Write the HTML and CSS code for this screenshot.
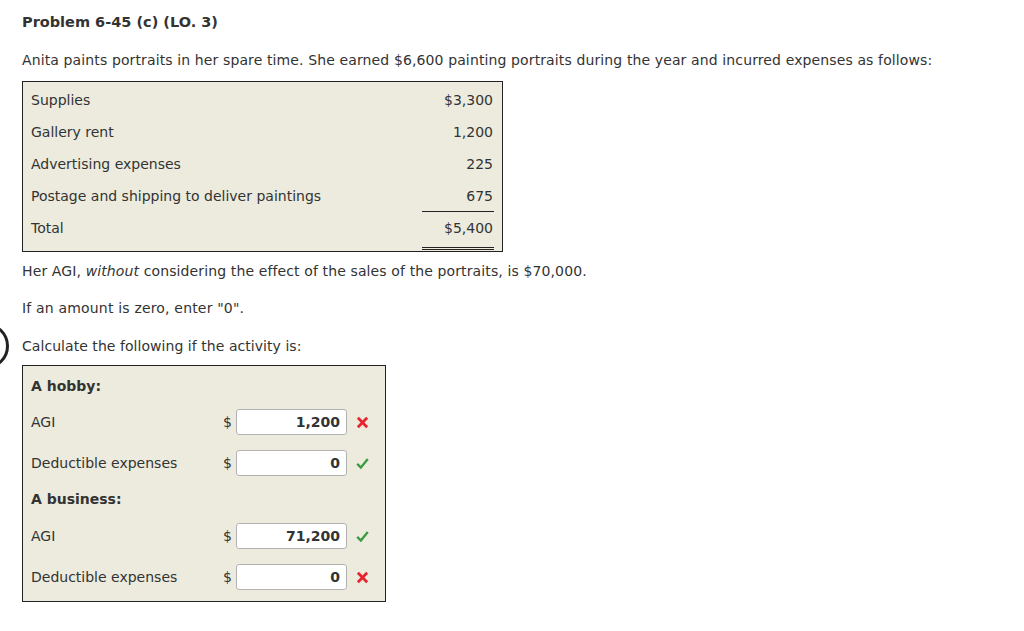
FILE: index.html
```html
<!DOCTYPE html>
<html>
<head>
<meta charset="utf-8">
<link rel="stylesheet" href="styles.css">
</head>
<body>
<div class="page">
  <h1 class="title">Problem 6-45 (c) (LO. 3)</h1>
  <p class="intro">Anita paints portraits in her spare time. She earned $6,600 painting portraits during the year and incurred expenses as follows:</p>
  <div class="expenses">
    <div class="row"><span class="lbl">Supplies</span><span class="amt">$3,300</span></div>
    <div class="row"><span class="lbl">Gallery rent</span><span class="amt">1,200</span></div>
    <div class="row"><span class="lbl">Advertising expenses</span><span class="amt">225</span></div>
    <div class="row"><span class="lbl">Postage and shipping to deliver paintings</span><span class="amt amt-sub">675</span></div>
    <div class="row row-total"><span class="lbl">Total</span><span class="amt amt-total">$5,400</span></div>
  </div>
  <p class="note">Her AGI, <em>without</em> considering the effect of the sales of the portraits, is $70,000.</p>
  <p class="note2">If an amount is zero, enter "0".</p>
  <div class="calc-wrap">
    <span class="ring"></span>
    <p class="calc">Calculate the following if the activity is:</p>
  </div>
  <div class="answers">
    <div class="group">A hobby:</div>
    <div class="frow">
      <span class="flbl">AGI</span><span class="dollar">$</span><span class="field">1,200</span>
      <svg class="mark" viewBox="0 0 14 14"><path d="M2 2 L12 12 M12 2 L2 12" stroke="#e8222f" stroke-width="3" fill="none"/></svg>
    </div>
    <div class="frow frow-2">
      <span class="flbl">Deductible expenses</span><span class="dollar">$</span><span class="field">0</span>
      <svg class="mark" viewBox="0 0 16 14"><path d="M1.5 7.5 L6 12 L14.5 1.5" stroke="#3a9a3f" stroke-width="2.8" fill="none"/></svg>
    </div>
    <div class="group g2">A business:</div>
    <div class="frow frow-3">
      <span class="flbl">AGI</span><span class="dollar">$</span><span class="field">71,200</span>
      <svg class="mark" viewBox="0 0 16 14"><path d="M1.5 7.5 L6 12 L14.5 1.5" stroke="#3a9a3f" stroke-width="2.8" fill="none"/></svg>
    </div>
    <div class="frow frow-4">
      <span class="flbl">Deductible expenses</span><span class="dollar">$</span><span class="field">0</span>
      <svg class="mark" viewBox="0 0 14 14"><path d="M2 2 L12 12 M12 2 L2 12" stroke="#e8222f" stroke-width="3" fill="none"/></svg>
    </div>
  </div>
</div>
</body>
</html>
```
FILE: styles.css
```css
html, body {
  margin: 0;
  padding: 0;
  background: #fff;
}
body {
  font-family: "DejaVu Sans", Verdana, sans-serif;
  font-size: 14px;
  color: #333;
}
.page {
  padding: 14px 0 0 22px;
}
.title {
  font-size: 14.5px;
  font-weight: bold;
  margin: 0;
  line-height: 17px;
}
.intro {
  margin: 21px 0 0 0;
  line-height: 17px;
  letter-spacing: 0.12px;
}
.expenses {
  margin-top: 12px;
  width: 463px;
  background: #ecebde;
  border: 1px solid #222;
  padding: 2px 8px 1px 8px;
}
.row {
  display: flex;
  justify-content: space-between;
  align-items: center;
  height: 32px;
}
.amt {
  width: 72px;
  text-align: right;
  height: 32px;
  line-height: 32px;
  padding-right: 1px;
  box-sizing: border-box;
}
.amt-sub {
  border-bottom: 1px solid #222;
}
.row-total {
  align-items: flex-start;
  height: 38px;
}
.row-total .lbl {
  line-height: 32px;
}
.amt-total {
  border-bottom: 3px double #222;
  height: 38px;
  padding-bottom: 3px;
  line-height: 32px;
}
.note {
  margin: 11px 0 0 0;
  line-height: 17px;
  letter-spacing: 0.12px;
}
.note2 {
  margin: 20px 0 0 0;
  line-height: 17px;
  letter-spacing: 0.18px;
}
.calc-wrap {
  position: relative;
  margin-top: 21px;
}
.ring {
  position: absolute;
  left: -59px;
  top: -15px;
  width: 40px;
  height: 40px;
  border: 3px solid #222;
  border-radius: 50%;
}
.calc {
  margin: 0;
  line-height: 17px;
  letter-spacing: 0.05px;
}
.answers {
  margin-top: 10px;
  width: 354px;
  background: #ecebde;
  border: 1px solid #222;
  padding: 7px 0 11px 8px;
}
.group {
  font-weight: bold;
  line-height: 26px;
  height: 26px;
}
.g2 {
  margin-top: 10px;
}
.frow {
  display: flex;
  align-items: center;
  height: 26px;
  margin-top: 10px;
}
.frow-2 {
  margin-top: 15px;
}
.frow-3 {
  margin-top: 11px;
}
.frow-4 {
  margin-top: 15px;
}
.flbl {
  width: 192px;
}
.dollar {
  width: 13px;
}
.field {
  box-sizing: border-box;
  width: 111px;
  height: 26px;
  line-height: 24px;
  background: #fff;
  border: 1px solid #b3b3b3;
  border-radius: 3px;
  text-align: right;
  font-weight: bold;
  padding-right: 6px;
}
.mark {
  width: 13px;
  height: 13px;
  margin-left: 9px;
}
```
